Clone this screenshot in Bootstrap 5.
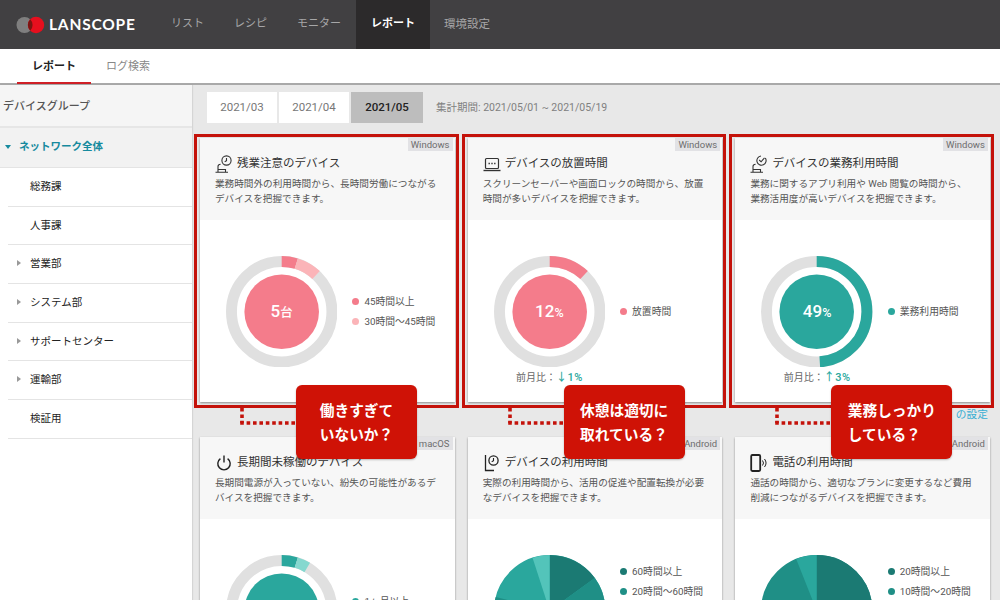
<!DOCTYPE html>
<html lang="ja">
<head>
<meta charset="utf-8">
<title>LANSCOPE レポート</title>
<link href="https://cdn.jsdelivr.net/npm/bootstrap@5.3.0/dist/css/bootstrap.min.css" rel="stylesheet">
<style>
html,body{height:600px;overflow:hidden;margin:0}
body{font-family:Roboto,"Noto Sans CJK JP",sans-serif;background:#e8e8e8;color:#333;font-size:10px}
.topbar{height:49px;background:#414042;padding:0;flex-wrap:nowrap;justify-content:flex-start}
.brand-box{width:156px;padding:0 0 0 16px;margin:0;display:flex;align-items:center;gap:4px}
.brand-word{font-family:Lato,sans-serif;font-weight:700;font-size:15.5px;color:#fff;letter-spacing:.8px;line-height:1;padding-top:1px}
.topbar .nav-link{height:49px;padding:0 15px;display:flex;align-items:center;color:#a7a7a8;font-size:11px}
.topbar .nav-link.nav-wide{font-size:11.5px;padding-left:14px}
.topbar .nav-link.active{background:#2c2a2b;color:#fff;font-weight:700}
.subbar{height:36px;background:#fff;border-bottom:2px solid #a9a9a9;padding-left:17px}
.subbar .nav-link{height:35px;padding:4px 15px 0;display:flex;align-items:center;font-size:11px;color:#888;border-bottom:2px solid transparent}
.subbar .nav-link.active{color:#222;font-weight:700;border-bottom-color:#cf1f26}
.sidebar-col{width:192px;flex:none;background:#fff;height:516px;box-shadow:1px 0 1px rgba(0,0,0,.08)}
.side-head{height:43px;background:#f5f5f5;border-bottom:2px solid #e6e6e6;display:flex;align-items:center;padding:3px 0 0 3px;font-size:11px;color:#555;font-weight:500}
.side-list{border-radius:0}
.side-list .list-group-item{height:38.7px;border:0;border-bottom:1px solid #e4e4e4;margin-left:8px;padding:0 0 0 22px;display:flex;align-items:center;font-size:10.5px;color:#222;font-weight:400;position:relative;background:transparent}
.side-list .list-group-item.side-active{margin-left:0;padding:0 0 2px 19px;height:40px;background:#f2f2f2;color:#168a9e;font-weight:700;font-size:10.5px}
.side-active::before{content:"";position:absolute;left:5px;top:17px;border:3.5px solid transparent;border-top:4px solid #168a9e;border-bottom:0}
.side-more::before{content:"";position:absolute;left:9px;top:15px;border:3.5px solid transparent;border-left:4.5px solid #999;border-right:0}
.main-col{flex:1;padding:7px 11px 0 8px;min-width:0}
.tab-row{height:31px;margin-bottom:15px;padding-left:7px;display:flex;align-items:center}
.tab-row .btn{width:72px;height:31px;padding:0;margin-left:0!important;font-size:11.5px;background:#fff;color:#777;border:0;border-right:2px solid #e8e8e8;border-radius:0}
.tab-row .btn.active{background:#bdbdbd;color:#222;font-weight:500;border-right:0}
.period{margin-left:13px;color:#808080;font-size:10.5px}
.card-grid{display:grid;grid-template-columns:repeat(3,254.5px);column-gap:13.2px;grid-template-rows:264px 35px 1fr;align-items:start}
.gap-row{grid-column:1/4;height:35px;text-align:right;padding:6px 2px 0 0;font-size:10.7px;color:#39aed3;line-height:14px}
.cell{position:relative;height:264px}
.cell-top{z-index:2}
.info-card{height:264px;border:0;border-radius:0;box-shadow:0 1px 2px rgba(0,0,0,.4);background:#fff;overflow:hidden}
.info-card .card-header{height:82px;background:#f7f7f7;border:0;border-radius:0;padding:17px 0 0 15px;position:relative}
.os-tag{position:absolute;right:2px;top:0;height:13px;padding:0 3px;background:#e2e2e5;color:#6d6d6d;font-size:9.5px;line-height:13px}
.card-ttl{display:flex;align-items:center;gap:4px;height:18px;font-size:11.5px;color:#333;margin:0;font-weight:400;white-space:nowrap}
.card-ttl svg{flex:none}
.card-dsc{margin:3px 0 0;font-size:9.65px;line-height:15px;color:#555;white-space:nowrap}
.info-card .card-body{padding:36px 0 0 26px;display:flex;align-items:flex-start}
.dn-col{width:111.4px;flex:none;display:flex;flex-direction:column;align-items:center}
.dn{display:grid;place-items:center;width:111.4px;height:111.4px}
.dn>*{grid-area:1/1}
.dn-val{color:#fff;font-size:17px;font-weight:500;line-height:1}
.dn-val small{font-size:12.5px}
.cmp{margin-top:5px;font-size:10px;color:#666;white-space:nowrap;line-height:12px}
.cmp b{font-weight:500;color:#2aa79d;letter-spacing:.5px;font-size:11px}
.lg{height:111px;margin-left:15px;display:flex;flex-direction:column;justify-content:center;gap:5px}
.lg.lg-two{justify-content:flex-start;padding-top:8.5px}
.lg.lg-one{justify-content:flex-start;padding-top:38.5px}
.lg-item{display:flex;align-items:center;gap:5px;font-size:9.8px;line-height:15px;color:#555;white-space:nowrap}
.lg-dot{width:7px;height:7px;border-radius:50%;flex:none}
.red-frame::after{content:"";position:absolute;left:-6px;right:-4px;top:-4px;bottom:-6px;border:3px solid #c4120a;pointer-events:none}
.callout{position:absolute;left:96px;top:247px;width:121px;height:74px;background:#cf1206;border-radius:6px;color:#fff;font-weight:700;font-size:14.7px;line-height:24px;display:flex;align-items:center;justify-content:center;box-shadow:0 1px 2px rgba(0,0,0,.25);white-space:nowrap;z-index:3}
.callout span{display:block;padding-top:1px}
.dots{position:absolute;left:40px;top:270px}
</style>
</head>
<body>
<nav class="navbar topbar">
  <div class="navbar-brand brand-box">
    <svg width="29" height="18" viewBox="0 0 29 18"><circle cx="8.5" cy="9" r="8" fill="#7f7f7f"/><circle cx="20" cy="9" r="8.2" fill="#e60f1e"/><path d="M14.2 3.3a8 8 0 0 1 0 11.4a8.2 8.2 0 0 1 0-11.4z" fill="#7a1512"/></svg>
    <span class="brand-word">LANSCOPE</span>
  </div>
  <ul class="nav flex-nowrap">
    <li class="nav-item"><a class="nav-link" href="#">リスト</a></li>
    <li class="nav-item"><a class="nav-link" href="#">レシピ</a></li>
    <li class="nav-item"><a class="nav-link" href="#">モニター</a></li>
    <li class="nav-item"><a class="nav-link active" href="#">レポート</a></li>
    <li class="nav-item"><a class="nav-link nav-wide" href="#">環境設定</a></li>
  </ul>
</nav>
<ul class="nav subbar">
  <li class="nav-item"><a class="nav-link active" href="#">レポート</a></li>
  <li class="nav-item"><a class="nav-link" href="#">ログ検索</a></li>
</ul>
<div class="d-flex">
  <aside class="sidebar-col">
    <div class="side-head">デバイスグループ</div>
    <ul class="list-group side-list">
      <li class="list-group-item side-active">ネットワーク全体</li>
      <li class="list-group-item">総務課</li>
      <li class="list-group-item">人事課</li>
      <li class="list-group-item side-more">営業部</li>
      <li class="list-group-item side-more">システム部</li>
      <li class="list-group-item side-more">サポートセンター</li>
      <li class="list-group-item side-more">運輸部</li>
      <li class="list-group-item">検証用</li>
    </ul>
  </aside>
  <main class="main-col">
    <div class="tab-row">
      <div class="btn-group">
        <button type="button" class="btn">2021/03</button>
        <button type="button" class="btn">2021/04</button>
        <button type="button" class="btn active">2021/05</button>
      </div>
      <span class="period">集計期間: 2021/05/01 ~ 2021/05/19</span>
    </div>
    <div class="card-grid">

      <div class="cell cell-top red-frame">
        <div class="card info-card">
          <div class="card-header">
            <span class="os-tag">Windows</span>
            <h3 class="card-ttl"><svg width="18" height="18" viewBox="0 0 18 18" fill="none" stroke="#333" stroke-width="1.1"><circle cx="11.5" cy="5.5" r="4.6"/><path d="M11.5 3v2.7l-1.8 1"/><path d="M0.5 17.2h12.5M3 17V11.5c0-1.4 1-2.2 2.6-2.2M3 14.5h7.5v2.6"/></svg>残業注意のデバイス</h3>
            <p class="card-dsc">業務時間外の利用時間から、長時間労働につながる<br>デバイスを把握できます。</p>
          </div>
          <div class="card-body">
            <div class="dn-col">
              <div class="dn">
                <svg width="111.4" height="111.4" viewBox="0 0 112 112"><g transform="rotate(-90 56 56)" fill="none" stroke-width="11"><circle cx="56" cy="56" r="50.5" stroke="#e0e0e0"/><circle cx="56" cy="56" r="50.5" stroke="#f47c8b" pathLength="100" stroke-dasharray="4.7 95.3"/><circle cx="56" cy="56" r="50.5" stroke="#fbb4b8" pathLength="100" stroke-dasharray="7.3 92.7" stroke-dashoffset="-4.7"/></g><circle cx="56" cy="56" r="37.5" fill="#f47c8b"/></svg>
                <span class="dn-val">5<small>台</small></span>
              </div>
            </div>
            <div class="lg">
              <div class="lg-item"><span class="lg-dot" style="background:#f47c8b"></span>45時間以上</div>
              <div class="lg-item"><span class="lg-dot" style="background:#fbb4b8"></span>30時間〜45時間</div>
            </div>
          </div>
        </div>
        <svg class="dots" width="58" height="18" viewBox="0 0 58 18" fill="none" stroke="#c4120a" stroke-width="3.6" stroke-dasharray="3.6 2.8"><path d="M2 0V15"/><path d="M0.2 15H57"/></svg>
        <div class="callout"><span>働きすぎて<br>いないか？</span></div>
      </div>

      <div class="cell cell-top red-frame">
        <div class="card info-card">
          <div class="card-header">
            <span class="os-tag">Windows</span>
            <h3 class="card-ttl"><svg width="18" height="18" viewBox="0 0 18 18" fill="none" stroke="#333" stroke-width="1.2"><rect x="2.5" y="3.5" width="13" height="10" rx="1"/><path d="M.5 15.5h17" stroke-width="1.4"/><path d="M5.5 8.5h1.4M8.3 8.5h1.4M11.1 8.5h1.4" stroke-width="1.5"/></svg>デバイスの放置時間</h3>
            <p class="card-dsc">スクリーンセーバーや画面ロックの時間から、放置<br>時間が多いデバイスを把握できます。</p>
          </div>
          <div class="card-body">
            <div class="dn-col">
              <div class="dn">
                <svg width="111.4" height="111.4" viewBox="0 0 112 112"><g transform="rotate(-90 56 56)" fill="none" stroke-width="11"><circle cx="56" cy="56" r="50.5" stroke="#e0e0e0"/><circle cx="56" cy="56" r="50.5" stroke="#f47c8b" pathLength="100" stroke-dasharray="12 88"/></g><circle cx="56" cy="56" r="37.5" fill="#f47c8b"/></svg>
                <span class="dn-val">12<small>%</small></span>
              </div>
              <div class="cmp">前月比：<b>↓1%</b></div>
            </div>
            <div class="lg">
              <div class="lg-item"><span class="lg-dot" style="background:#f47c8b"></span>放置時間</div>
            </div>
          </div>
        </div>
        <svg class="dots" width="58" height="18" viewBox="0 0 58 18" fill="none" stroke="#c4120a" stroke-width="3.6" stroke-dasharray="3.6 2.8"><path d="M2 0V15"/><path d="M0.2 15H57"/></svg>
        <div class="callout"><span>休憩は適切に<br>取れている？</span></div>
      </div>

      <div class="cell cell-top red-frame">
        <div class="card info-card">
          <div class="card-header">
            <span class="os-tag">Windows</span>
            <h3 class="card-ttl"><svg width="18" height="18" viewBox="0 0 18 18" fill="none" stroke="#333" stroke-width="1.1"><path d="M15.3 3A4.6 4.6 0 1 1 11 1"/><path d="M9.2 5l1.9 1.8 3.4-4"/><path d="M0.5 17.2h12.5M3 17V11.5c0-1.4 1-2.2 2.6-2.2M3 14.5h7.5v2.6"/></svg>デバイスの業務利用時間</h3>
            <p class="card-dsc">業務に関するアプリ利用や Web 閲覧の時間から、<br>業務活用度が高いデバイスを把握できます。</p>
          </div>
          <div class="card-body">
            <div class="dn-col">
              <div class="dn">
                <svg width="111.4" height="111.4" viewBox="0 0 112 112"><g transform="rotate(-90 56 56)" fill="none" stroke-width="11"><circle cx="56" cy="56" r="50.5" stroke="#e0e0e0"/><circle cx="56" cy="56" r="50.5" stroke="#2aa79d" pathLength="100" stroke-dasharray="49 51"/></g><circle cx="56" cy="56" r="37.5" fill="#2aa79d"/></svg>
                <span class="dn-val">49<small>%</small></span>
              </div>
              <div class="cmp">前月比：<b>↑3%</b></div>
            </div>
            <div class="lg">
              <div class="lg-item"><span class="lg-dot" style="background:#2aa79d"></span>業務利用時間</div>
            </div>
          </div>
        </div>
        <svg class="dots" width="58" height="18" viewBox="0 0 58 18" fill="none" stroke="#c4120a" stroke-width="3.6" stroke-dasharray="3.6 2.8"><path d="M2 0V15"/><path d="M0.2 15H57"/></svg>
        <div class="callout"><span>業務しっかり<br>している？</span></div>
      </div>

      <div class="gap-row">の設定</div>

      <div class="cell">
        <div class="card info-card">
          <div class="card-header">
            <span class="os-tag">macOS</span>
            <h3 class="card-ttl"><svg width="18" height="18" viewBox="0 0 18 18" fill="none" stroke="#222" stroke-width="1.4"><path d="M5.4 4.6a6.2 6.2 0 1 0 7.2 0"/><path d="M9 1.5v7"/></svg>長期間未稼働のデバイス</h3>
            <p class="card-dsc">長期間電源が入っていない、紛失の可能性があるデ<br>バイスを把握できます。</p>
          </div>
          <div class="card-body">
            <div class="dn-col">
              <div class="dn">
                <svg width="111.4" height="111.4" viewBox="0 0 112 112"><g transform="rotate(-90 56 56)" fill="none" stroke-width="11"><circle cx="56" cy="56" r="50.5" stroke="#e0e0e0"/><circle cx="56" cy="56" r="50.5" stroke="#2aa79d" pathLength="100" stroke-dasharray="4.7 95.3"/><circle cx="56" cy="56" r="50.5" stroke="#85d8cf" pathLength="100" stroke-dasharray="3.8 96.2" stroke-dashoffset="-4.7"/></g><circle cx="56" cy="56" r="37.5" fill="#2aa79d"/></svg>
              </div>
            </div>
            <div class="lg lg-one">
              <div class="lg-item"><span class="lg-dot" style="background:#2aa79d"></span>1ヶ月以上</div>
            </div>
          </div>
        </div>
      </div>

      <div class="cell">
        <div class="card info-card">
          <div class="card-header">
            <span class="os-tag">Android</span>
            <h3 class="card-ttl"><svg width="18" height="18" viewBox="0 0 18 18" fill="none" stroke="#222" stroke-width="1.3"><path d="M2.5 1v15.5h8.5"/><circle cx="10.5" cy="6.5" r="4.6"/><path d="M10.5 4v2.7l-1.8 1" stroke-width="1.1"/></svg>デバイスの利用時間</h3>
            <p class="card-dsc">実際の利用時間から、活用の促進や配置転換が必要<br>なデバイスを把握できます。</p>
          </div>
          <div class="card-body">
            <div class="dn-col">
              <div class="dn">
                <svg width="111.4" height="111.4" viewBox="0 0 112 112"><g transform="rotate(-90 56 56)" fill="none" stroke-width="56"><circle cx="56" cy="56" r="28" stroke="#2aa79d"/><circle cx="56" cy="56" r="28" stroke="#1b7a73" pathLength="100" stroke-dasharray="15 85"/><circle cx="56" cy="56" r="28" stroke="#1f8f86" pathLength="100" stroke-dasharray="30 70" stroke-dashoffset="-15"/><circle cx="56" cy="56" r="28" stroke="#1f8f86" pathLength="100" stroke-dasharray="8 92" stroke-dashoffset="-71"/><circle cx="56" cy="56" r="28" stroke="#53c4ba" pathLength="100" stroke-dasharray="5 95" stroke-dashoffset="-95"/></g></svg>
              </div>
            </div>
            <div class="lg lg-two">
              <div class="lg-item"><span class="lg-dot" style="background:#1b7a73"></span>60時間以上</div>
              <div class="lg-item"><span class="lg-dot" style="background:#1f8f86"></span>20時間〜60時間</div>
            </div>
          </div>
        </div>
      </div>

      <div class="cell">
        <div class="card info-card">
          <div class="card-header">
            <span class="os-tag">Android</span>
            <h3 class="card-ttl"><svg width="18" height="18" viewBox="0 0 18 18" fill="none" stroke="#222"><rect x="1.2" y="1" width="9" height="16" rx="1.2" stroke-width="1.8"/><path d="M12.5 6.5a4 4 0 0 1 0 5" stroke-width="1"/><path d="M14.5 5a6.5 6.5 0 0 1 0 8" stroke-width="1"/></svg>電話の利用時間</h3>
            <p class="card-dsc">通話の時間から、適切なプランに変更するなど費用<br>削減につながるデバイスを把握できます。</p>
          </div>
          <div class="card-body">
            <div class="dn-col">
              <div class="dn">
                <svg width="111.4" height="111.4" viewBox="0 0 112 112"><g transform="rotate(-90 56 56)" fill="none" stroke-width="56"><circle cx="56" cy="56" r="28" stroke="#1f8f86"/><circle cx="56" cy="56" r="28" stroke="#1b7a73" pathLength="100" stroke-dasharray="30 70"/><circle cx="56" cy="56" r="28" stroke="#2aa79d" pathLength="100" stroke-dasharray="6 94" stroke-dashoffset="-94"/></g></svg>
              </div>
            </div>
            <div class="lg lg-two">
              <div class="lg-item"><span class="lg-dot" style="background:#1b7a73"></span>20時間以上</div>
              <div class="lg-item"><span class="lg-dot" style="background:#1f8f86"></span>10時間〜20時間</div>
            </div>
          </div>
        </div>
      </div>

    </div>
  </main>
</div>
<script src="https://cdn.jsdelivr.net/npm/bootstrap@5.3.0/dist/js/bootstrap.bundle.min.js"></script>
</body>
</html>
